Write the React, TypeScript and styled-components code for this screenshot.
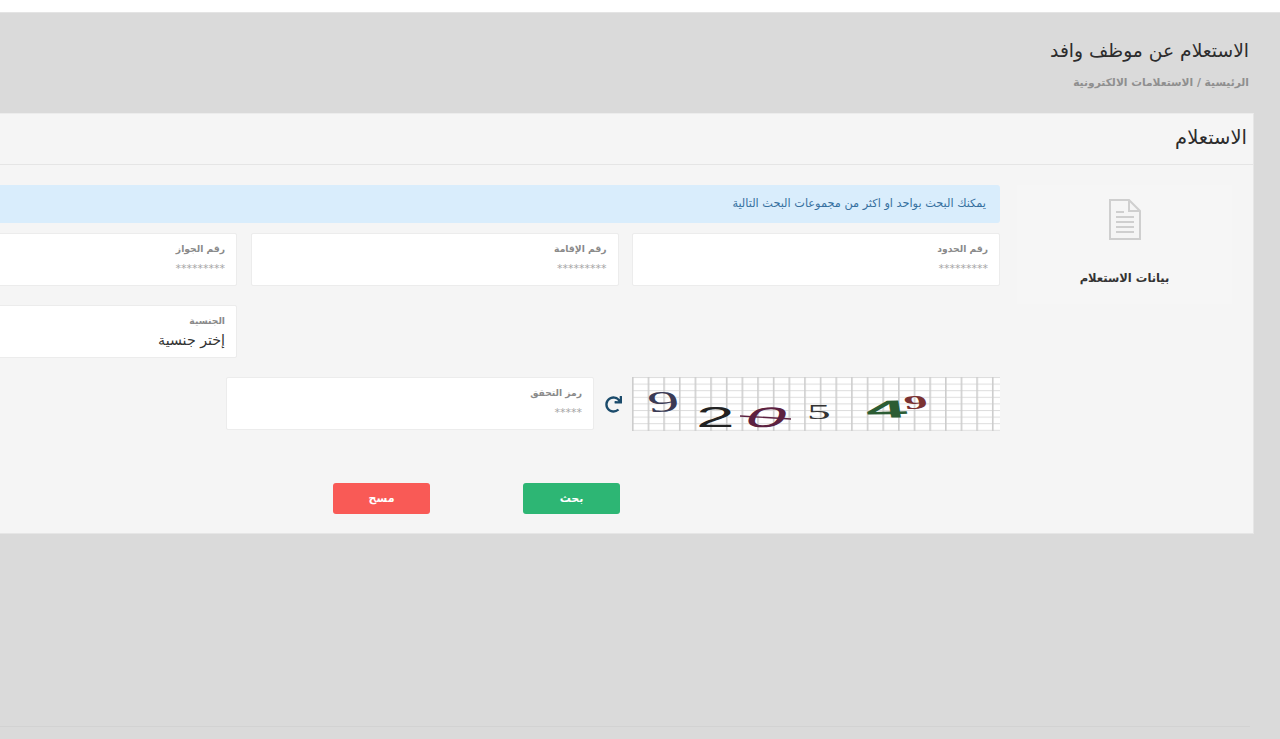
import React from "react";
import styled, { createGlobalStyle } from "styled-components";
import { FaRedo } from "react-icons/fa";

const FONT = `"DejaVu Sans", "Noto Sans", sans-serif`;

const GlobalStyle = createGlobalStyle`
  html, body {
    margin: 0;
    height: 739px;
    overflow: hidden;
    background: #ffffff;
  }
  * {
    box-sizing: border-box;
  }
`;

function DocIcon(): React.ReactElement {
  return (
    <svg width="32" height="41" viewBox="0 0 32 41" fill="none">
      <path d="M1 1H20L31 12V40H1Z" fill="#f5f5f5" stroke="#cfcfcf" strokeWidth="2" />
      <path d="M20 1V12H31" stroke="#cfcfcf" strokeWidth="2" />
      <path
        d="M7 13H15M7 18H25M7 23H25M7 28H25M7 33H25"
        stroke="#cfcfcf"
        strokeWidth="1.8"
      />
    </svg>
  );
}

function CaptchaImage(): React.ReactElement {
  return (
    <CaptchaSvg width="368" height="54" viewBox="0 0 368 54" direction="ltr">
      <defs>
        <pattern id="captcha-v" width="15.65" height="54" patternUnits="userSpaceOnUse">
          <rect x="0" y="0" width="1.6" height="54" fill="#cdcdcd" />
        </pattern>
        <pattern id="captcha-h" width="368" height="6.6" patternUnits="userSpaceOnUse">
          <rect x="0" y="0" width="368" height="1" fill="#dddddd" />
        </pattern>
      </defs>
      <rect width="368" height="54" fill="#ffffff" />
      <rect width="368" height="54" fill="url(#captcha-h)" />
      <rect width="368" height="54" fill="url(#captcha-v)" />
      <g fontFamily='"Liberation Serif", serif' textAnchor="start">
        <text transform="translate(17 35) scale(2.05 0.95) rotate(-4)" fontSize="31" fill="#3b3b55">
          9
        </text>
        <text transform="translate(64 50) scale(2.4 1)" fontSize="29" fontFamily='"Liberation Sans", sans-serif' fill="#222222">
          2
        </text>
        <text transform="translate(110 50) scale(2.55 0.98) skewX(-10)" fontSize="29" fontFamily='"Liberation Sans", sans-serif' fill="#5c2140">
          0
        </text>
        <path d="M108 39 L159 42" stroke="#5c2140" strokeWidth="1.4" />
        <text transform="translate(175 42) scale(2.5 1.05)" fontSize="19" fill="#333333">
          5
        </text>
        <text transform="translate(235 41) scale(2.55 0.85) rotate(-3)" fontSize="29" fontFamily='"Liberation Sans", sans-serif' fontWeight="700" fill="#2c5c33">
          4
        </text>
        <text transform="translate(273 32) scale(2.5 1) rotate(-4)" fontSize="19" fontWeight="700" fill="#7a3232">
          9
        </text>
      </g>
    </CaptchaSvg>
  );
}

export default function App(): React.ReactElement {
  return (
    <Page dir="rtl">
      <GlobalStyle />
      <TopBar />
      <Content>
        <PageHead>
          <PageTitle>الاستعلام عن موظف وافد</PageTitle>
          <Breadcrumb>الرئيسية / الاستعلامات الالكترونية</Breadcrumb>
        </PageHead>
        <Panel>
          <PanelHeader>الاستعلام</PanelHeader>
          <PanelBody>
            <Sidebar>
              <DocIcon />
              <SidebarLabel>بيانات الاستعلام</SidebarLabel>
            </Sidebar>
            <FormArea>
              <Notice>يمكنك البحث بواحد او اكثر من مجموعات البحث التالية</Notice>
              <FieldGrid>
                <Field>
                  <FieldLabel>رقم الحدود</FieldLabel>
                  <FieldHint>*********</FieldHint>
                </Field>
                <Field>
                  <FieldLabel>رقم الإقامة</FieldLabel>
                  <FieldHint>*********</FieldHint>
                </Field>
                <Field>
                  <FieldLabel>رقم الجواز</FieldLabel>
                  <FieldHint>*********</FieldHint>
                </Field>
                <Field $column={3}>
                  <FieldLabel>الجنسية</FieldLabel>
                  <FieldValue>إختر جنسية</FieldValue>
                </Field>
              </FieldGrid>
              <CaptchaRow>
                <CaptchaFrame>
                  <CaptchaImage />
                </CaptchaFrame>
                <RefreshButton>
                  <FaRedo size={17} />
                </RefreshButton>
                <Field>
                  <FieldLabel>رمز التحقق</FieldLabel>
                  <FieldHint>*****</FieldHint>
                </Field>
              </CaptchaRow>
              <Actions>
                <ActionButton $color="#2db674">بحث</ActionButton>
                <ActionButton $color="#f95a56">مسح</ActionButton>
              </Actions>
            </FormArea>
          </PanelBody>
        </Panel>
        <Footer />
      </Content>
    </Page>
  );
}

const Page = styled.div`
  width: 1280px;
  height: 739px;
  overflow: hidden;
  font-family: ${FONT};
`;

const TopBar = styled.div`
  height: 13px;
  background: #ffffff;
  border-bottom: 1px solid #e4e4e4;
`;

const Content = styled.div`
  height: 726px;
  background: #dadada;
  padding: 26px 26px 0 0;
`;

const PageHead = styled.div`
  height: 74px;
  padding-right: 5px;
`;

const PageTitle = styled.h1`
  margin: 0;
  height: 24px;
  font-size: 18.7px;
  line-height: 24px;
  font-weight: 400;
  color: #2c2c2c;
`;

const Breadcrumb = styled.div`
  margin-top: 12px;
  font-size: 10.7px;
  line-height: 16px;
  font-weight: 700;
  color: #8f8f8f;
`;

const Panel = styled.section`
  width: 1400px;
  height: 421px;
  background: #f5f5f5;
  border: 1px solid #e6e6e6;
  border-top-color: #ececec;
`;

const PanelHeader = styled.div`
  height: 51px;
  padding-right: 6px;
  font-size: 19.5px;
  line-height: 48px;
  color: #2c2c2c;
  border-bottom: 1px solid #e5e5e5;
`;

const PanelBody = styled.div`
  display: flex;
  padding: 20px 21px 0 0;
  gap: 17px;
`;

const Sidebar = styled.aside`
  flex: 0 0 215px;
  height: 119px;
  display: flex;
  flex-direction: column;
  align-items: center;
  padding-top: 14px;
  background: #f6f6f6;
`;

const SidebarLabel = styled.div`
  margin-top: 29px;
  font-size: 11.5px;
  line-height: 18px;
  font-weight: 700;
  color: #333333;
`;

const FormArea = styled.div`
  flex: 1;
  min-width: 0;
`;

const Notice = styled.div`
  height: 38px;
  padding-right: 14px;
  font-size: 11.3px;
  line-height: 37px;
  color: #36709f;
  background: #d9edfc;
  border-radius: 3px;
`;

const FieldGrid = styled.div`
  display: grid;
  grid-template-columns: repeat(3, 368px);
  column-gap: 13.5px;
  row-gap: 19px;
  margin-top: 10px;
`;

const Field = styled.div<{ $column?: number }>`
  grid-column: ${({ $column }) => $column ?? "auto"};
  width: 368px;
  height: 53px;
  padding: 8px 11px 0;
  background: #ffffff;
  border: 1px solid #ececec;
  border-radius: 2px;
`;

const FieldLabel = styled.div`
  font-size: 9.2px;
  line-height: 14px;
  font-weight: 700;
  color: #8a8a8a;
`;

const FieldHint = styled.div`
  margin-top: 5px;
  font-size: 11px;
  line-height: 16px;
  color: #a6a6a6;
`;

const FieldValue = styled.div`
  margin-top: 2px;
  font-size: 14.2px;
  line-height: 20px;
  color: #333333;
`;

const CaptchaRow = styled.div`
  display: flex;
  align-items: flex-start;
  margin-top: 19px;
`;

const CaptchaFrame = styled.div`
  width: 368px;
  height: 54px;
  line-height: 0;
`;

const CaptchaSvg = styled.svg`
  overflow: visible;
`;

const RefreshButton = styled.div`
  width: 38px;
  height: 54px;
  display: flex;
  align-items: center;
  justify-content: center;
  color: #1b4b6b;
`;

const Actions = styled.div`
  display: flex;
  gap: 93px;
  margin-top: 52px;
  padding-right: 380px;
`;

const ActionButton = styled.button<{ $color: string }>`
  width: 97px;
  height: 31px;
  padding: 0;
  border: 0;
  border-radius: 3px;
  font-family: ${FONT};
  font-size: 11px;
  font-weight: 700;
  color: #ffffff;
  background: ${({ $color }) => $color};
`;

const Footer = styled.div`
  height: 1px;
  margin-top: 192px;
  margin-right: 4px;
  background: #d2d2d2;
`;
